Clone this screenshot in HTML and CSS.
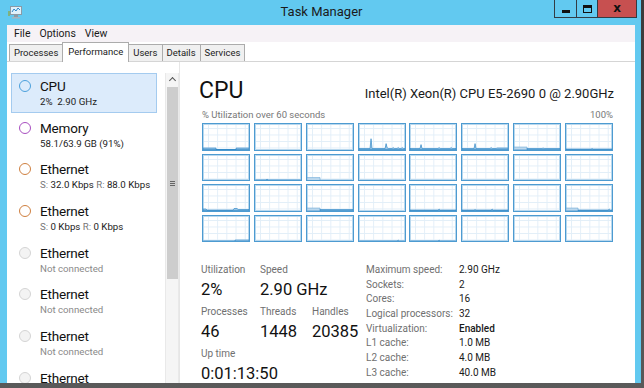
FILE: index.html
```html
<!doctype html>
<html>
<head>
	<meta charset="utf-8">
	<title>Task Manager</title>
	<link rel="stylesheet" href="styles.css">
</head>
<body>
<div class="window">
	<div class="titlebar">
		<svg class="appicon" width="14" height="13" viewBox="0 0 14 13">
			<rect x="0" y="5" width="2" height="5" fill="#7fb27f"/>
			<rect x="2.5" y="0.5" width="11" height="8" fill="#dff1fb" stroke="#8a9aa6"/>
			<polyline points="4,6 6,3 8,5 10,2 12,4" fill="none" stroke="#2e88c8" stroke-width="1"/>
			<rect x="6" y="9" width="4" height="2" fill="#8a9aa6"/>
			<rect x="4" y="11" width="8" height="1.5" fill="#a7b4be"/>
		</svg>
		<span class="title">Task Manager</span>
		<div class="controls">
			<span class="ctl min"><i></i></span>
			<span class="ctl max"><i></i></span>
			<span class="ctl close">x</span>
		</div>
	</div>

	<div class="frame">
		<div class="menubar"><span>File</span><span>Options</span><span>View</span></div>
		<div class="tabs">
			<span class="tab">Processes</span>
			<span class="tab active">Performance</span>
			<span class="tab">Users</span>
			<span class="tab">Details</span>
			<span class="tab">Services</span>
		</div>

		<div class="main">
			<div class="side">
				<ul class="list">
					<li class="item selected"><i class="dot cpu"></i><b>CPU</b><small>2%&nbsp; 2.90 GHz</small></li>
					<li class="item"><i class="dot mem"></i><b>Memory</b><small>58.1/63.9 GB (91%)</small></li>
					<li class="item"><i class="dot net"></i><b>Ethernet</b><small><em>S:</em> 32.0 Kbps <em>R:</em> 88.0 Kbps</small></li>
					<li class="item"><i class="dot net"></i><b>Ethernet</b><small><em>S:</em> 0 Kbps <em>R:</em> 0 Kbps</small></li>
					<li class="item"><i class="dot off"></i><b>Ethernet</b><small class="muted">Not connected</small></li>
					<li class="item"><i class="dot off"></i><b>Ethernet</b><small class="muted">Not connected</small></li>
					<li class="item"><i class="dot off"></i><b>Ethernet</b><small class="muted">Not connected</small></li>
					<li class="item"><i class="dot off"></i><b>Ethernet</b></li>
				</ul>
				<div class="scrollbar">
					<span class="arrow"></span>
					<span class="thumb"><i></i></span>
				</div>
			</div>

			<div class="perf">
				<div class="perf-head">
					<h1>CPU</h1>
					<span class="model">Intel(R) Xeon(R) CPU E5-2690 0 @ 2.90GHz</span>
				</div>
				<div class="axis"><span>% Utilization over 60 seconds</span><span>100%</span></div>

				<div class="graphs">
					<div class="g"><svg viewBox="0 0 46 26" preserveAspectRatio="none"><polygon points="0,26 0,24.5 13,24.5 13,26 33,26 33,24.5 46,24.5 46,26"/></svg></div>
					<div class="g"></div>
					<div class="g"></div>
					<div class="g"><svg viewBox="0 0 46 26" preserveAspectRatio="none"><polygon points="0,26 0,25 11,25 12,15 13,25 26,25 27,20 28,24 29,25 33,25 34,24 35,25 38,25 39,24 40,25 42,25 43,24 44,25 46,25 46,26"/></svg></div>
					<div class="g"><svg viewBox="0 0 46 26" preserveAspectRatio="none"><polygon points="0,26 0,25 10,25 11,21 12,25 28,25 29,24 30,25 40,25 41,24 42,25 46,25 46,26"/></svg></div>
					<div class="g"><svg viewBox="0 0 46 26" preserveAspectRatio="none"><polygon points="0,26 0,25 12,25 13,20 14,25 28,25 29,24 30,25 34,25 35,24.5 46,24.5 46,26"/></svg></div>
					<div class="g"><svg viewBox="0 0 46 26" preserveAspectRatio="none"><polygon class="light" points="0,26 0,23.5 13,23.5 13,26"/><polygon points="13,26 13,25 28,25 29,24.5 30,25 46,25 46,26"/></svg></div>
					<div class="g"><svg viewBox="0 0 46 26" preserveAspectRatio="none"><polygon points="0,26 0,25.5 25,25.5 26,25 27,25.5 46,25.5 46,26"/></svg></div>

					<div class="g"></div>
					<div class="g"><svg viewBox="0 0 46 26" preserveAspectRatio="none"><polygon points="0,26 0,25.5 11,25.5 12,24.5 13,25.5 46,25.5 46,26"/></svg></div>
					<div class="g"><svg viewBox="0 0 46 26" preserveAspectRatio="none"><polygon class="light" points="0,26 0,23 13,23 13,26"/></svg></div>
					<div class="g"></div>
					<div class="g"></div>
					<div class="g"></div>
					<div class="g"></div>
					<div class="g"></div>

					<div class="g"><svg viewBox="0 0 46 26" preserveAspectRatio="none"><polygon points="0,26 0,24.5 3,24.5 4,25.5 30,25.5 31,24 34,24 35,25 46,25 46,26"/></svg></div>
					<div class="g"></div>
					<div class="g"><svg viewBox="0 0 46 26" preserveAspectRatio="none"><polygon class="light" points="0,26 0,23.5 13,23.5 13,26"/><polygon points="13,26 13,25 46,25 46,26"/></svg></div>
					<div class="g"></div>
					<div class="g"><svg viewBox="0 0 46 26" preserveAspectRatio="none"><polygon points="0,26 0,25.5 28,25.5 29,24.5 30,25.5 46,25.5 46,26"/></svg></div>
					<div class="g"><svg viewBox="0 0 46 26" preserveAspectRatio="none"><polygon points="0,26 0,25.5 12,25.5 13,25 14,25.5 29,25.5 30,24.5 31,25.5 46,25.5 46,26"/></svg></div>
					<div class="g"></div>
					<div class="g"><svg viewBox="0 0 46 26" preserveAspectRatio="none"><polygon class="light" points="0,26 0,23.5 12,23.5 12,26"/><polygon points="12,26 12,25.5 42,25.5 43,24.5 44,25.5 46,25.5 46,26"/></svg></div>

					<div class="g"><svg viewBox="0 0 46 26" preserveAspectRatio="none"><polygon points="0,26 0,25.5 32,25.5 32,24.5 46,24.5 46,26"/></svg></div>
					<div class="g"></div>
					<div class="g"></div>
					<div class="g"><svg viewBox="0 0 46 26" preserveAspectRatio="none"><polygon points="0,26 0,25.5 38,25.5 39,24.5 40,25.5 46,25.5 46,26"/></svg></div>
					<div class="g"><svg viewBox="0 0 46 26" preserveAspectRatio="none"><polygon points="0,26 0,25.5 28,25.5 29,24.5 30,25.5 46,25.5 46,26"/></svg></div>
					<div class="g"></div>
					<div class="g"></div>
					<div class="g"></div>
				</div>

				<div class="stats">
					<div class="dyn">
						<div class="row">
							<div class="stat w60"><label>Utilization</label><span class="big">2%</span></div>
							<div class="stat"><label>Speed</label><span class="big">2.90 GHz</span></div>
						</div>
						<div class="row">
							<div class="stat w60"><label>Processes</label><span class="big">46</span></div>
							<div class="stat w51"><label>Threads</label><span class="big">1448</span></div>
							<div class="stat"><label>Handles</label><span class="big">20385</span></div>
						</div>
						<div class="row">
							<div class="stat"><label>Up time</label><span class="big">0:01:13:50</span></div>
						</div>
					</div>
					<table class="facts">
						<tr><th>Maximum speed:</th><td>2.90 GHz</td></tr>
						<tr><th>Sockets:</th><td>2</td></tr>
						<tr><th>Cores:</th><td>16</td></tr>
						<tr><th>Logical processors:</th><td>32</td></tr>
						<tr><th>Virtualization:</th><td class="strong">Enabled</td></tr>
						<tr><th>L1 cache:</th><td>1.0 MB</td></tr>
						<tr><th>L2 cache:</th><td>4.0 MB</td></tr>
						<tr><th>L3 cache:</th><td>40.0 MB</td></tr>
					</table>
				</div>
			</div>
		</div>
	</div>
</div>
</body>
</html>
```

FILE: styles.css
```css
* {margin:0; padding:0; box-sizing:border-box;}
body {width:644px; height:388px; overflow:hidden; background:linear-gradient(#3a3a3a, #5a5a5a); font-family:Roboto,"Open Sans",sans-serif; color:#1a1a1a;}

.window {width:641px; height:383px; background:#62c9f0; display:flex; flex-direction:column;}

/* title bar */
.titlebar {height:25px; display:grid; grid-template-columns:1fr auto 1fr; align-items:start;}
.appicon {margin:6px 0 0 8px;}
.title {font-size:13px; line-height:24px; color:#1b1b1b; padding-left:2px;}
.controls {justify-self:end; display:flex; margin-right:4px;}
.ctl {height:18px; border:1px solid #333c44; border-top:0; border-left-width:0; display:flex; align-items:center; justify-content:center;}
.ctl.min {width:23px; border-left-width:1px;}
.ctl.max {width:21px;}
.ctl.close {width:39px; background:#c75050; font:bold 12px/1 "DejaVu Sans",sans-serif; color:#111; padding-bottom:2px;}
.ctl.min i {width:8px; height:3px; background:#111; margin-top:5px;}
.ctl.max i {width:9px; height:8px; border:1px solid #111; border-top-width:3px;}

.frame {flex:1; margin:0 6px 0 7px; background:#fff; display:flex; flex-direction:column; min-height:0;}

.menubar {height:17px; background:#f6f2f6; font-size:10.5px; line-height:17px; padding-left:7px; display:flex; gap:9px;}

.tabs {height:20px; display:flex; align-items:flex-end; padding-left:2px; border-bottom:1px solid #d5d5d5; font-size:9.5px;}
.tab {height:17px; line-height:15px; padding:0 4px; background:#f0f0f0; border:1px solid #acacac; border-bottom:0; margin-left:-1px; color:#222;}
.tab:first-child {margin-left:0;}
.tab.active {height:20px; line-height:18px; background:#fff; padding:0 5px; margin-bottom:-1px; position:relative;}

.main {flex:1; display:flex; min-height:0; overflow:hidden;}

/* left list */
.side {width:173px; display:flex; padding:11px 0 0 4px; border-right:1px solid #e6e6e6;}
.list {list-style:none; width:152px;}
.item {height:41.7px; padding:4px 0 0 28px; position:relative; border:1px solid transparent;}
.item.selected {background:#dcebfb; border-color:#a4cbef; height:40px; margin-bottom:1.7px;}
.item b {display:block; font-weight:400; font-size:13.5px; letter-spacing:-0.2px; line-height:17px; color:#111;}
.item small {display:block; font-size:9.7px; line-height:13px; color:#222; white-space:nowrap;}
.item small em {font-style:normal; color:#777;}
.item small.muted {color:#8a8a8a;}
.dot {position:absolute; left:7px; top:6px; width:12px; height:12px; border-radius:50%; border:1.5px solid;}
.dot.cpu {border-color:#4ba0dc;}
.dot.mem {border-color:#a84fc0;}
.dot.net {border-color:#cf7f3f;}
.dot.off {border-color:#d4d4d4; background:#f3f3f3; border-width:1px;}

.scrollbar {width:14px; margin-left:8px; background:#f5f5f5; border-left:1px solid #e9e9e9; border-right:1px solid #e9e9e9; display:flex; flex-direction:column;}
.arrow {height:13px; position:relative;}
.arrow:after {content:""; position:absolute; left:4px; top:5px; width:4px; height:4px; border-left:1px solid #555; border-top:1px solid #555; transform:rotate(45deg);}
.thumb {height:192px; margin:1px 0 0 1px; width:11px; background:#cdcdcd; display:flex; align-items:center; justify-content:center;}
.thumb i {width:5px; height:5px; border-top:1px solid #666; border-bottom:1px solid #666; position:relative;}
.thumb i:after {content:""; position:absolute; left:0; right:0; top:1px; border-top:1px solid #666;}

/* performance panel */
.perf {flex:1; padding:14px 20px 0 19px;}
.perf-head {display:flex; justify-content:space-between; align-items:baseline;}
.perf-head h1 {font-weight:400; font-size:23px; line-height:30px; color:#111;}
.model {font-size:13px; color:#1a1a1a; margin-right:1px;}
.axis {display:flex; justify-content:space-between; font-size:9.5px; line-height:12px; color:#777; margin:3px 2px 2px 3px;}

.graphs {display:grid; grid-template-columns:repeat(8, 1fr); gap:3px 3.7px; margin:0 2px 0 3px;}
.g {height:27.5px; border:1px solid #4d9bd1; box-shadow:inset 0 0 0 1px #b9d8ee;
	background-color:#fff;
	background-image:linear-gradient(90deg, #e2eef8 1px, transparent 1px), linear-gradient(#e2eef8 1px, transparent 1px);
	background-size:9.2px 100%, 100% 6.5px; background-position:5px 0, 0 4px;}
.g svg {display:block; width:100%; height:100%;}
.g polygon {fill:#9cc6e6; stroke:#1b7cc0; stroke-width:0.6;}
.g polygon.light {fill:#bcd8ee; stroke:#6aa8d6;}

.stats {display:flex; align-items:flex-start; margin-top:20px; padding-left:2px;}
.dyn {width:165px;}
.row {display:flex; margin-bottom:2px;}
.stat label {display:block; font-size:10px; line-height:15px; color:#707070;}
.stat .big {display:block; font-size:16.5px; line-height:25px; color:#111;}
.w60 {width:59px;}
.w51 {width:52px;}

.facts {border-collapse:collapse; font-size:10px;}
.facts th {font-weight:400; text-align:left; color:#707070; width:93px; height:14.7px; padding:0; white-space:nowrap;}
.facts td {color:#1a1a1a; padding:0;}
.facts td.strong {font-weight:500;}
```
